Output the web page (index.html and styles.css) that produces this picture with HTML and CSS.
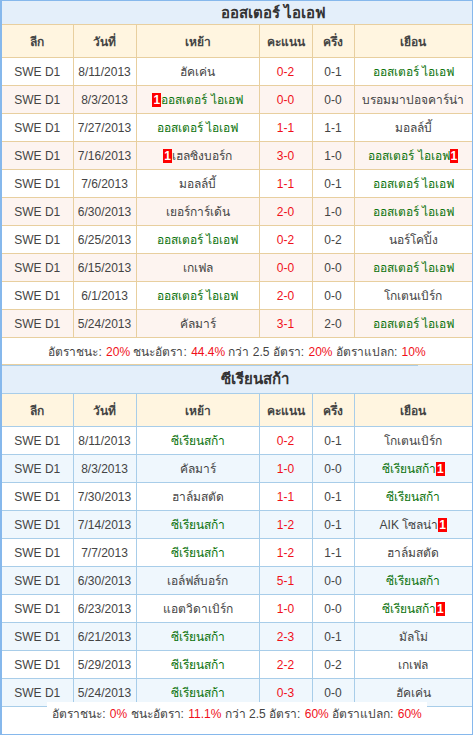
FILE: index.html
```html
<!DOCTYPE html>
<html lang="th">
<head>
<meta charset="utf-8">
<link rel="stylesheet" href="styles.css">
</head>
<body>
<div class="wrap">
  <div class="title t1">ออสเตอร์ ไอเอฟ</div>
  <table class="grid tan">
    <colgroup><col class="c1"><col class="c2"><col class="c3"><col class="c4"><col class="c5"><col class="c6"></colgroup>
    <thead><tr><th>ลีก</th><th>วันที่</th><th>เหย้า</th><th>คะแนน</th><th>ครึ่ง</th><th>เยือน</th></tr></thead>
    <tbody>
      <tr><td>SWE D1</td><td>8/11/2013</td><td>ฮัคเค่น</td><td class="sc">0-2</td><td>0-1</td><td class="g">ออสเตอร์ ไอเอฟ</td></tr>
      <tr><td>SWE D1</td><td>8/3/2013</td><td class="g"><span class="rc">1</span>ออสเตอร์ ไอเอฟ</td><td class="sc">0-0</td><td>0-0</td><td>บรอมมาปอจคาร์น่า</td></tr>
      <tr><td>SWE D1</td><td>7/27/2013</td><td class="g">ออสเตอร์ ไอเอฟ</td><td class="sc">1-1</td><td>1-1</td><td>มอลล์บี้</td></tr>
      <tr><td>SWE D1</td><td>7/16/2013</td><td><span class="rc">1</span>เฮลซิงบอร์ก</td><td class="sc">3-0</td><td>1-0</td><td class="g">ออสเตอร์ ไอเอฟ<span class="rc">1</span></td></tr>
      <tr><td>SWE D1</td><td>7/6/2013</td><td>มอลล์บี้</td><td class="sc">1-1</td><td>0-1</td><td class="g">ออสเตอร์ ไอเอฟ</td></tr>
      <tr><td>SWE D1</td><td>6/30/2013</td><td>เยอร์การ์เด้น</td><td class="sc">2-0</td><td>1-0</td><td class="g">ออสเตอร์ ไอเอฟ</td></tr>
      <tr><td>SWE D1</td><td>6/25/2013</td><td class="g">ออสเตอร์ ไอเอฟ</td><td class="sc">0-2</td><td>0-2</td><td>นอร์โคปิ้ง</td></tr>
      <tr><td>SWE D1</td><td>6/15/2013</td><td>เกเฟล</td><td class="sc">0-0</td><td>0-0</td><td class="g">ออสเตอร์ ไอเอฟ</td></tr>
      <tr><td>SWE D1</td><td>6/1/2013</td><td class="g">ออสเตอร์ ไอเอฟ</td><td class="sc">2-0</td><td>0-0</td><td>โกเตนเบิร์ก</td></tr>
      <tr><td>SWE D1</td><td>5/24/2013</td><td>คัลมาร์</td><td class="sc">3-1</td><td>2-0</td><td class="g">ออสเตอร์ ไอเอฟ</td></tr>
    </tbody>
    <tfoot><tr><td colspan="6" class="sum">อัตราชนะ: <span class="r">20%</span> ชนะอัตรา: <span class="r">44.4%</span> กว่า 2.5 อัตรา: <span class="r">20%</span> อัตราแปลก: <span class="r">10%</span></td></tr></tfoot>
  </table>

  <div class="title t2">ซีเรียนสก้า</div>
  <table class="grid blue">
    <colgroup><col class="c1"><col class="c2"><col class="c3"><col class="c4"><col class="c5"><col class="c6"></colgroup>
    <thead><tr><th>ลีก</th><th>วันที่</th><th>เหย้า</th><th>คะแนน</th><th>ครึ่ง</th><th>เยือน</th></tr></thead>
    <tbody>
      <tr><td>SWE D1</td><td>8/11/2013</td><td class="g">ซีเรียนสก้า</td><td class="sc">0-2</td><td>0-1</td><td>โกเตนเบิร์ก</td></tr>
      <tr><td>SWE D1</td><td>8/3/2013</td><td>คัลมาร์</td><td class="sc">1-0</td><td>0-0</td><td class="g">ซีเรียนสก้า<span class="rc">1</span></td></tr>
      <tr><td>SWE D1</td><td>7/30/2013</td><td>ฮาล์มสตัด</td><td class="sc">1-1</td><td>0-1</td><td class="g">ซีเรียนสก้า</td></tr>
      <tr><td>SWE D1</td><td>7/14/2013</td><td class="g">ซีเรียนสก้า</td><td class="sc">1-2</td><td>0-1</td><td>AIK โซลน่า<span class="rc">1</span></td></tr>
      <tr><td>SWE D1</td><td>7/7/2013</td><td class="g">ซีเรียนสก้า</td><td class="sc">1-2</td><td>1-1</td><td>ฮาล์มสตัด</td></tr>
      <tr><td>SWE D1</td><td>6/30/2013</td><td>เอล์ฟส์บอร์ก</td><td class="sc">5-1</td><td>0-0</td><td class="g">ซีเรียนสก้า</td></tr>
      <tr><td>SWE D1</td><td>6/23/2013</td><td>แอตวิดาเบิร์ก</td><td class="sc">1-0</td><td>0-0</td><td class="g">ซีเรียนสก้า<span class="rc">1</span></td></tr>
      <tr><td>SWE D1</td><td>6/21/2013</td><td class="g">ซีเรียนสก้า</td><td class="sc">2-3</td><td>0-1</td><td>มัลโม่</td></tr>
      <tr><td>SWE D1</td><td>5/29/2013</td><td class="g">ซีเรียนสก้า</td><td class="sc">2-2</td><td>0-2</td><td>เกเฟล</td></tr>
      <tr><td>SWE D1</td><td>5/24/2013</td><td class="g">ซีเรียนสก้า</td><td class="sc">0-3</td><td>0-0</td><td>ฮัคเค่น</td></tr>
    </tbody>
  </table>
  <div class="foot">
    <div class="sum2">อัตราชนะ: <span class="r">0%</span> ชนะอัตรา: <span class="r">11.1%</span> กว่า 2.5 อัตรา: <span class="r">60%</span> อัตราแปลก: <span class="r">60%</span></div>
  </div>
</div>
</body>
</html>
```

FILE: styles.css
```css
html, body {
  margin: 0;
  padding: 0;
  background: #fff;
}
body {
  font-family: "Liberation Sans", Arial, sans-serif;
  font-size: 12px;
  color: #444;
}
.wrap {
  width: 470px;
  height: 733px;
  border: 1px solid #86b8ec;
  border-left-width: 2px;
  overflow: hidden;
}
.title {
  background: #e4effa;
  font-size: 15px;
  font-weight: bold;
  color: #333;
  padding-left: 219px;
  box-sizing: border-box;
}
.t1 {
  height: 23px;
  line-height: 23px;
}
.t2 {
  height: 28px;
  line-height: 28px;
  background: linear-gradient(#a8cde9, #a8cde9) no-repeat 0 0 / 416px 1px, #e4effa;
}
.grid {
  width: 100%;
  border-collapse: collapse;
  table-layout: fixed;
}
.c1 { width: 71px; }
.c2 { width: 63px; }
.c3 { width: 123px; }
.c4 { width: 53px; }
.c5 { width: 42px; }
.c6 { width: auto; }
.grid th,
.grid td {
  padding: 0;
  text-align: center;
  white-space: nowrap;
  overflow: hidden;
}
.grid th {
  height: 32px;
  background: #fff5e0;
  font-weight: bold;
  color: #444;
  font-size: 12px;
}
.grid td {
  height: 27px;
}
.tan th,
.tan td {
  border: 1px solid #e8cf9f;
}
.tan tbody tr:nth-child(even) td { background: #fdf4f0; }
.blue th,
.blue td {
  border: 1px solid #a8cde9;
}
.blue tbody tr:nth-child(even) td { background: #eff7fd; }
.grid th:first-child, .grid td:first-child { border-left: none; }
.grid th:last-child, .grid td:last-child { border-right: none; }
.g { color: #0a720a; }
.sc { color: #f0101a; }
.r {
  color: #f0101a;
  margin-left: 1px;
}
.rc {
  display: inline-block;
  background: #f00;
  color: #fff;
  font-weight: bold;
  font-family: "Liberation Sans", sans-serif;
  font-size: 12px;
  line-height: 14px;
  padding: 0 1px;
}
.grid td.sum {
  height: 26px;
  background: #fff;
  color: #444;
}
.foot {
  text-align: center;
}
.sum2 {
  display: inline-block;
  background: #fff;
  margin-top: -8px;
  padding: 0 5px;
  height: 24px;
  line-height: 24px;
  position: relative;
}
```
